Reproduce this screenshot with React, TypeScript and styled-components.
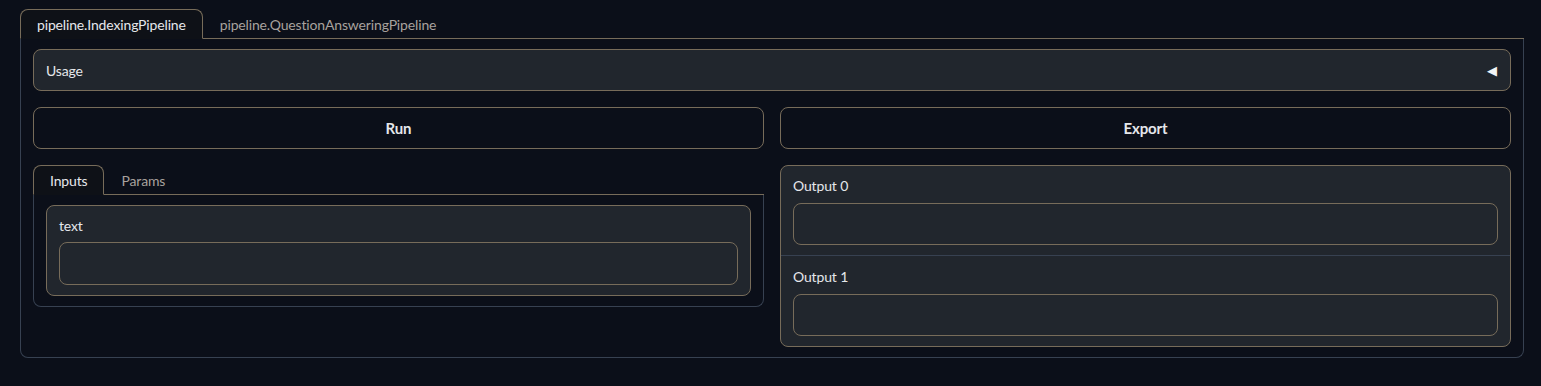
import React from "react";
import styled, { createGlobalStyle } from "styled-components";

const TAN = "#776c5a";
const GRAY = "#374151";
const BLOCK = "#21262d";
const PAGE = "#0b0f19";
const TEXT = "#e5e7eb";

const Global = createGlobalStyle`
  html, body { margin: 0; padding: 0; background: ${PAGE}; }
  body { font-family: Lato, "Noto Sans", sans-serif; font-size: 14px; color: ${TEXT}; letter-spacing: -0.15px; }
  * { box-sizing: border-box; }
`;

const Page = styled.div`
  padding: 9px 17px 0 20px;
  height: 386px;
`;

const TabNav = styled.div`
  display: flex;
  border-bottom: 1px solid ${TAN};
`;

const Tab = styled.div<{ $active?: boolean }>`
  display: flex;
  align-items: center;
  padding: 0 16px;
  margin-bottom: -1px;
  font-size: 14px;
  color: ${(p) => (p.$active ? TEXT : "#a8a29e")};
  background: ${(p) => (p.$active ? "#0e1117" : "transparent")};
  border: 1px solid ${(p) => (p.$active ? TAN : "transparent")};
  border-bottom: 1px solid ${(p) => (p.$active ? "#0e1117" : "transparent")};
  border-radius: 8px 8px 0 0;
  height: ${(p) => (p.$active ? "30px" : "29px")};
  margin-top: ${(p) => (p.$active ? "0" : "1px")};
`;

const Panel = styled.div<{ $pad: string }>`
  border: 1px solid ${GRAY};
  border-top: none;
  border-radius: 0 0 8px 8px;
  padding: ${(p) => p.$pad};
  display: flex;
  flex-direction: column;
  gap: 16px;
`;

const Accordion = styled.div`
  height: 42px;
  background: ${BLOCK};
  border: 1px solid ${TAN};
  border-radius: 8px;
  display: flex;
  align-items: center;
  justify-content: space-between;
  padding: 0 13px 0 12px;
`;

const Arrow = styled.span`
  font-size: 13px;
  color: #f3f4f6;
`;

const Row = styled.div`
  display: grid;
  grid-template-columns: 1fr 1fr;
  gap: 16px;
  align-items: start;
`;

const Button = styled.button`
  height: 42px;
  background: transparent;
  border: 1px solid ${TAN};
  border-radius: 8px;
  color: ${TEXT};
  font-family: inherit;
  letter-spacing: inherit;
  font-size: 15px;
  font-weight: 700;
`;

const Column = styled.div`
  display: flex;
  flex-direction: column;
`;

const Block = styled.div`
  background: ${BLOCK};
  border: 1px solid ${TAN};
  border-radius: 8px;
  display: flex;
  flex-direction: column;
`;

const Field = styled.div<{ $divider?: boolean }>`
  padding: ${(p) => (p.$divider ? "11px 12px 10px" : "10px 12px")};
  border-top: ${(p) => (p.$divider ? `1px solid ${GRAY}` : "none")};
  display: flex;
  flex-direction: column;
`;

const Label = styled.div<{ $gap?: number }>`
  line-height: 20px;
  font-size: 14px;
  margin-bottom: ${(p) => p.$gap ?? 7}px;
  color: ${TEXT};
`;

const Input = styled.div<{ $h?: number }>`
  height: ${(p) => p.$h ?? 42}px;
  border: 1px solid ${TAN};
  border-radius: 8px;
  background: ${BLOCK};
`;

export default function App() {
  return (
    <>
      <Global />
      <Page>
        <TabNav>
          <Tab $active>pipeline.IndexingPipeline</Tab>
          <Tab>pipeline.QuestionAnsweringPipeline</Tab>
        </TabNav>
        <Panel $pad="10px 12px 10px 12px">
          <Accordion>
            <span>Usage</span>
            <Arrow>◀</Arrow>
          </Accordion>
          <Row>
            <Button>Run</Button>
            <Button>Export</Button>
          </Row>
          <Row>
            <Column>
              <TabNav>
                <Tab $active>Inputs</Tab>
                <Tab>Params</Tab>
              </TabNav>
              <Panel $pad="10px 12px">
                <Block>
                  <Field>
                    <Label $gap={6}>text</Label>
                    <Input $h={43} />
                  </Field>
                </Block>
              </Panel>
            </Column>
            <Block>
              <Field>
                <Label>Output 0</Label>
                <Input />
              </Field>
              <Field $divider>
                <Label>Output 1</Label>
                <Input />
              </Field>
            </Block>
          </Row>
        </Panel>
      </Page>
    </>
  );
}
